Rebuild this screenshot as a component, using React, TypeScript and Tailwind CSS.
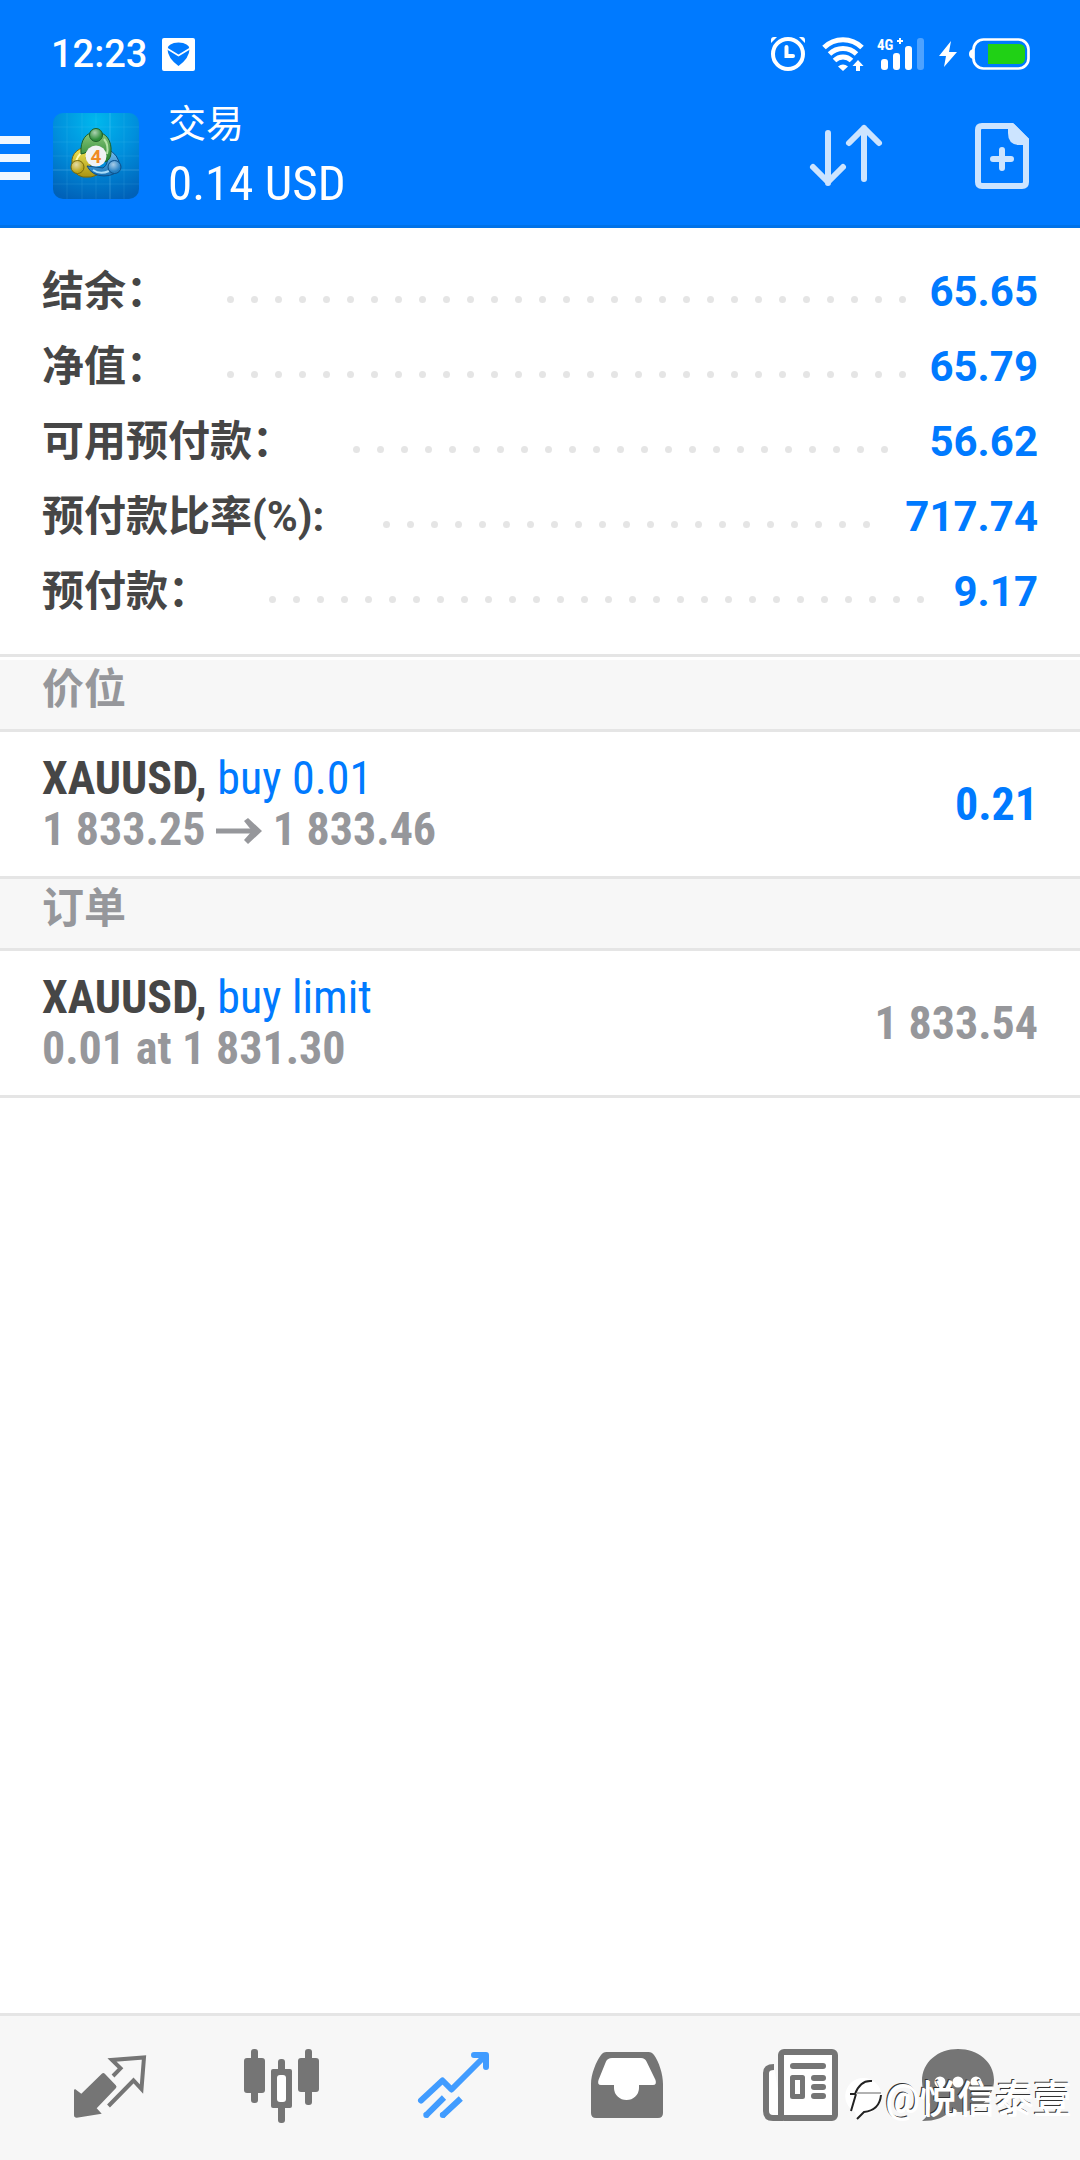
import type { ReactNode } from "react";

const SUMMARY = [
  { label: "结余：", value: "65.65" },
  { label: "净值：", value: "65.79" },
  { label: "可用预付款：", value: "56.62" },
  { label: "预付款比率(%):", value: "717.74" },
  { label: "预付款：", value: "9.17" },
];

const LEADER_DOTS = Array.from({ length: 60 }, (_, i) => i);

const StatusIcons = () => (
  <svg className="h-[36px] w-[260px]" viewBox="770 36 260 36" fill="none">
    {/* alarm */}
    <circle cx="788" cy="54" r="15" stroke="#fff" strokeWidth="4" />
    <path d="M786.5 47v9H793" stroke="#fff" strokeWidth="4" strokeLinecap="round" />
    <path d="M771 43v-3q0-3 3-3h3zM805 43v-3q0-3-3-3h-3z" fill="#fff" />
    {/* wifi */}
    <g stroke="#fff" strokeWidth="5">
      <path d="M824 47.500A27 27 0 0 1 862 47.500" />
      <path d="M829.500 54A19.500 19.500 0 0 1 856.500 54" />
      <path d="M834.500 60.500A12 12 0 0 1 851.500 60.500" />
    </g>
    <path d="M843 71l-5-4.500q5-4 10 0z" fill="#fff" />
    <path d="M858 71v-8" stroke="#fff" strokeWidth="4" />
    <path d="M852.500 66l5.500-6 5.500 6z" fill="#fff" />
    {/* mobile signal */}
    <text x="877" y="50" fontSize="15" fontWeight="700" fill="#fff" fontFamily="Roboto Condensed, Roboto">
      4G
    </text>
    <path d="M900 38v6M897 41h6" stroke="#fff" strokeWidth="2" />
    <rect x="881" y="59" width="7" height="11" rx="3" fill="#fff" />
    <rect x="893" y="53" width="7" height="17" rx="3" fill="#fff" />
    <rect x="905" y="46" width="7" height="24" rx="3" fill="#fff" />
    <rect x="917" y="38" width="7" height="32" rx="3" fill="#4da2ff" />
    {/* charging */}
    <path d="M951 41l-12 15h7l-2 11 13-15h-8z" fill="#fff" />
    {/* battery */}
    <rect x="973.500" y="39.500" width="55" height="29" rx="10" stroke="#fff" strokeWidth="2.700" />
    <path d="M973 49q-4 1-4 5t4 5z" fill="#fff" />
    <path d="M988 44h31q6 0 6 6v8q0 6-6 6h-31z" fill="#20d115" />
  </svg>
);

const MailBadge = () => (
  <svg className="h-[33px] w-[33px]" viewBox="0 0 33 33">
    <rect width="33" height="33" rx="2" fill="#fff" />
    <path d="M5.500 11Q6 5 16.500 4.500 27 5 27.500 11 27.500 20 16.500 28 5.500 20 5.500 11z" fill="#007aff" />
    <path d="M5 10.500l11.500 7 11.500-7" stroke="#fff" strokeWidth="1.600" fill="none" />
  </svg>
);

const AppLogo = () => (
  <svg className="h-[86px] w-[86px] shrink-0" viewBox="0 0 86 86">
    <defs>
      <radialGradient id="sky" cx="50%" cy="10%" r="95%">
        <stop offset="0%" stopColor="#00b8ee" />
        <stop offset="50%" stopColor="#008fdc" />
        <stop offset="100%" stopColor="#0061b8" />
      </radialGradient>
      <linearGradient id="green" x1="0" y1="0" x2="0" y2="1">
        <stop offset="0%" stopColor="#8ecb7c" />
        <stop offset="100%" stopColor="#22802f" />
      </linearGradient>
      <linearGradient id="yellow" x1="0" y1="0" x2="0" y2="1">
        <stop offset="0%" stopColor="#f3ea58" />
        <stop offset="100%" stopColor="#a99312" />
      </linearGradient>
      <linearGradient id="blue" x1="0" y1="0" x2="0" y2="1">
        <stop offset="0%" stopColor="#7cc4f0" />
        <stop offset="100%" stopColor="#1672b8" />
      </linearGradient>
      <radialGradient id="shine" cx="40%" cy="30%" r="60%">
        <stop offset="0%" stopColor="#fff" stopOpacity="0.600" />
        <stop offset="100%" stopColor="#fff" stopOpacity="0" />
      </radialGradient>
    </defs>
    <rect width="86" height="86" rx="10" fill="url(#sky)" />
    <path d="M14 0v86M29 0v86M43 0v86M71 0v86M0 14h86M0 29h86M0 43h86M0 71h86" stroke="#7fd4ff" strokeOpacity="0.120" />
    <path d="M57 0v86M0 57h86" stroke="#9fe0ff" strokeOpacity="0.250" />
    <g strokeWidth="1">
      <path d="M19 50C18 40 26 34 38 33l-5 12 11 17q-5 3-14 2-10-2-11-14z" fill="url(#yellow)" stroke="#77690c" />
      <path d="M23 48q3-9 12-11" fill="none" stroke="#fffbb0" strokeWidth="2" />
      <path d="M54 36q12 5 13 18-4 9-16 9-12 0-17-10l16 2q7-4 4-19z" fill="url(#blue)" stroke="#0d4f88" />
      <path d="M40 57q7 5 16 1" fill="none" stroke="#a8dcf8" strokeWidth="2" />
      <path d="M28 41C27 27 33 19 43 19s16 9 15 20c0 6-3 9-6 10l-4-15H38l-6 6z" fill="url(#green)" stroke="#1d5f2a" />
      <path d="M51 26q5 6 3 15" fill="none" stroke="#b5e3a8" strokeWidth="2" />
      <circle cx="43" cy="22" r="6.500" fill="#2f8e3b" stroke="#1d5f2a" />
      <circle cx="24.500" cy="54" r="6.500" fill="#bca71d" stroke="#77690c" />
      <circle cx="61.500" cy="54" r="6.500" fill="#2480c4" stroke="#0d4f88" />
    </g>
    <circle cx="43" cy="22" r="6" fill="url(#shine)" />
    <circle cx="24.500" cy="54" r="6" fill="url(#shine)" />
    <circle cx="61.500" cy="54" r="6" fill="url(#shine)" />
    <circle cx="43" cy="43" r="10.500" fill="#f1f2f5" />
    <text x="43" y="50" textAnchor="middle" fontSize="19" fontWeight="700" fill="#f08a24" fontFamily="Roboto">
      4
    </text>
  </svg>
);

const NavIcon = ({ children }: { children: ReactNode }) => (
  <svg className="h-[96px] w-[96px]" viewBox="0 0 96 96" fill="none">
    {children}
  </svg>
);

const NAV_ITEMS = [
  {
    name: "行情",
    icon: (
      <NavIcon>
        <path
          d="M13 49l6.300 4.700 20.500-20q1.500-1.500 3 0l11 11.500q1.500 1.500 0 3L34.700 68.300l5 5.500-25 4q-2.700 0-2.700-2.700V50z"
          fill="#757575"
        />
        <path
          d="M51 36l7.500-7.700L50 20l32-2.500L79.500 49l-8-8.500L46.500 66"
          stroke="#757575"
          strokeWidth="4"
        />
      </NavIcon>
    ),
  },
  {
    name: "图表",
    icon: (
      <NavIcon>
        <g fill="#757575">
          <rect x="10" y="18" width="21" height="35" rx="3" />
          <rect x="17" y="9" width="7" height="54" rx="3" />
          <rect x="37" y="29" width="21" height="39" rx="2" />
          <rect x="44" y="19" width="7" height="64" rx="3" />
          <rect x="64" y="18" width="21" height="34" rx="3" />
          <rect x="71" y="9" width="7" height="56" rx="3" />
        </g>
        <rect x="43" y="35" width="9" height="27" rx="3" fill="#fff" />
      </NavIcon>
    ),
  },
  {
    name: "交易",
    icon: (
      <NavIcon>
        <g stroke="#419cff" strokeWidth="6">
          <path d="M15 60.500l21.500-20 9 9L79 16" strokeLinecap="round" strokeLinejoin="round" />
          <path d="M68 15h12v12" strokeLinecap="round" strokeLinejoin="round" />
          <path d="M19.500 75.800L38 57.500M36 76l18.800-17.500" />
        </g>
        <circle cx="20.300" cy="75" r="3" fill="#419cff" />
        <circle cx="36.800" cy="75" r="3" fill="#419cff" />
      </NavIcon>
    ),
  },
  {
    name: "历史",
    icon: (
      <NavIcon>
        <path
          d="M13 44c0-10 5-22 10-29q2-3 5.500-3h42q3.500 0 5.500 3c5 7 9 19 9 29v29q0 5-5 5H18q-5 0-5-5z"
          fill="#757575"
        />
        <path
          d="M34 18h29q4 0 5.500 3.500L77.500 40q1.500 5-2.500 5H61v3a12.500 12 0 0 1-25 0v-3H23q-4 0-2.500-5l7.500-18.500Q29.500 18 34 18z"
          fill="#fff"
        />
      </NavIcon>
    ),
  },
  {
    name: "新闻",
    icon: (
      <NavIcon>
        <path d="M24 27q-8 0-8 6v38q0 7 7 7h10" fill="#fff" stroke="#757575" strokeWidth="6" />
        <rect x="31" y="12" width="54" height="66" rx="3" fill="#fff" stroke="#757575" strokeWidth="6" />
        <g fill="#757575">
          <rect x="40" y="23" width="36" height="6" rx="3" />
          <rect x="61" y="35" width="15" height="6" rx="3" />
          <rect x="61" y="44" width="15" height="6" rx="3" />
          <rect x="61" y="53" width="15" height="6" rx="3" />
        </g>
        <rect x="42.500" y="37.500" width="10" height="19" fill="#fff" stroke="#757575" strokeWidth="5" strokeLinejoin="round" />
      </NavIcon>
    ),
  },
  {
    name: "聊天",
    icon: (
      <NavIcon>
        <path
          d="M36 9c20 0 36 13 36 31S56 72 38 72q-6 0-10-1-8 10-28 10 8-6 8-17-8-9-8-23C0 22 16 9 36 9z"
          fill="#757575"
        />
        <g fill="#fff">
          <circle cx="18" cy="42" r="5.500" />
          <circle cx="36" cy="42" r="5.500" />
          <circle cx="54" cy="42" r="5.500" />
        </g>
      </NavIcon>
    ),
  },
];

const Section = ({ title, children }: { title: string; children: ReactNode }) => (
  <section>
    <h2 className="h-[72px] border-b-[3px] border-[#e5e5e5] bg-[#f7f7f7] px-[42px] text-[42px] leading-[60px] font-bold text-[#96979b]">
      {title}
    </h2>
    {children}
  </section>
);

interface PositionProps {
  symbol: string;
  type: string;
  detail: ReactNode;
  value: string;
  profit?: boolean;
}

const Position = ({ symbol, type, detail, value, profit }: PositionProps) => (
  <div className="flex h-[147px] items-center justify-between border-b-[3px] border-[#e5e5e5] px-[42px] font-['Roboto_Condensed',Roboto,sans-serif] text-[46px] leading-[51px] font-bold">
    <div>
      <p className="text-[#464646]">
        {symbol}, <span className="font-normal text-[#007aff]">{type}</span>
      </p>
      <p className="text-[#96979b]">{detail}</p>
    </div>
    <span className={profit ? "text-[#007aff]" : "text-[#96979b]"}>{value}</span>
  </div>
);

const App = () => {
  return (
    <div className="relative flex min-h-screen flex-col bg-white font-[Roboto,'Noto_Sans_CJK_SC',sans-serif]">
      <header className="border-b-[3px] border-[#0072e8] bg-[#007aff] text-white">
        <div className="flex h-[87px] items-center justify-between pt-[21px] pr-[50px] pl-[51px]">
          <div className="flex items-center gap-[15px]">
            <span className="text-[38px] leading-[48px] font-medium">12:23</span>
            <MailBadge />
          </div>
          <StatusIcons />
        </div>

        <div className="flex h-[138px] items-center pr-[51px]">
          <button aria-label="菜单" className="mr-[23px] flex w-[30px] flex-col gap-[10px] pt-[4px]">
            <span className="h-[8px] w-full bg-[#f0f7ff]" />
            <span className="h-[8px] w-full bg-[#f0f7ff]" />
            <span className="h-[8px] w-full bg-[#f0f7ff]" />
          </button>
          <AppLogo />
          <div className="ml-[29px] flex-1 pb-[4px]">
            <p className="text-[38px] leading-[60px]">交易</p>
            <h1 className="font-['Roboto_Condensed',Roboto,sans-serif] text-[49px] leading-[60px]">0.14 USD</h1>
          </div>
          <button aria-label="排序" className="mr-[90px]">
            <svg className="h-[66px] w-[78px]" viewBox="0 0 78 66" fill="none" stroke="#cce4ff" strokeWidth="6" strokeLinecap="round" strokeLinejoin="round">
              <path d="M21 10v50M6 44l15 15 15-15M57 56V5M42 20L57 5l15 15" />
            </svg>
          </button>
          <button aria-label="新订单">
            <svg className="h-[66px] w-[54px]" viewBox="0 0 54 66" fill="none" stroke="#cce4ff" strokeWidth="6">
              <path d="M7 3h30l14 14v42q0 4-4 4H7q-4 0-4-4V7q0-4 4-4z" />
              <path d="M33 1h6l15 15v6H43q-10-1-10-12z" fill="#cce4ff" stroke="none" />
              <path d="M27 27v18M18 36h18" strokeLinecap="round" />
            </svg>
          </button>
        </div>
      </header>

      <main className="flex-1">
        <dl className="border-b-[3px] border-[#e5e5e5] px-[42px] pt-[26px] pb-[25px] text-[42px] leading-[75px] font-bold">
          {SUMMARY.map((row) => (
            <div key={row.label} className="flex h-[75px]">
              <dt className="text-[#464646]">{row.label}</dt>
              <dd className="flex flex-1">
                {/* dotted leader, only whole dots stay on the first line */}
                <div aria-hidden="true" className="mt-[33px] mr-[12px] ml-[50px] flex h-[24px] flex-1 flex-wrap overflow-hidden">
                  {LEADER_DOTS.map((dot) => (
                    <span key={dot} className="flex h-[24px] w-[24px] items-center justify-center">
                      <span className="h-[7px] w-[7px] rounded-full bg-[#e5e5e5]" />
                    </span>
                  ))}
                </div>
                <span className="text-[#007aff]">{row.value}</span>
              </dd>
            </div>
          ))}
        </dl>

        <div className="pt-[3px]">
          <Section title="价位">
            <Position
              symbol="XAUUSD"
              type="buy 0.01"
              detail={
                <>
                  1 833.25{" "}
                  <svg aria-label="→" className="mb-[4px] inline-block h-[28px] w-[46px]" viewBox="0 0 46 28" fill="none" stroke="#96979b" strokeWidth="5">
                    <path d="M0 14h40" />
                    <path d="M28 4l4-3 14 13-14 13-4-4 8-9z" fill="#96979b" stroke="none" />
                  </svg>{" "}
                  1 833.46
                </>
              }
              value="0.21"
              profit
            />
          </Section>
          <Section title="订单">
            <Position symbol="XAUUSD" type="buy limit" detail="0.01 at 1 831.30" value="1 833.54" />
          </Section>
        </div>
      </main>

      <nav className="flex h-[147px] items-center justify-around border-t-[3px] border-[#e5e5e5] bg-[#f7f7f7] px-[24px]">
        {NAV_ITEMS.map((item) => (
          <button key={item.name} aria-label={item.name}>
            {item.icon}
          </button>
        ))}
      </nav>

      {/* watermark */}
      <div className="pointer-events-none absolute right-[9px] bottom-[33px] flex items-center gap-[3px] text-[38px] leading-[56px] text-white [text-shadow:1px_1px_0_#fff,-1px_-1px_0_#333]">
        <svg className="h-[42px] w-[37px]" viewBox="0 0 37 42" fill="none" stroke="#222">
          <path d="M18 0a18 18 0 0 1 1 36l-7 6-2-8A18 18 0 0 1 18 0z" fill="#fff" stroke="none" />
          <path d="M6 33L11 16M5 16h5C13 8 18 2 27 3M36 17C35 28 28 33 19 34l-7 7" strokeWidth="2" />
          <path d="M12 15h24" stroke="#999" strokeWidth="1.500" />
        </svg>
        <span>@悦信泰壹</span>
      </div>
    </div>
  );
};

export default App;
